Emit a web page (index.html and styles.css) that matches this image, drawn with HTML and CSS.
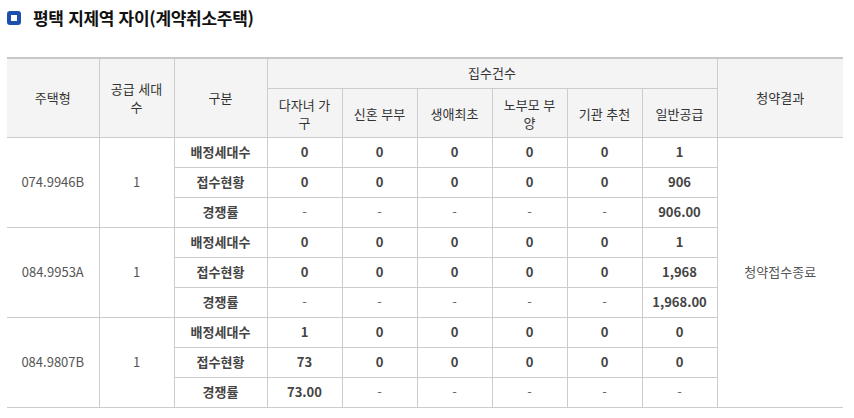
FILE: index.html
```html
<!DOCTYPE html>
<html lang="ko">
<head>
<meta charset="utf-8">
<link rel="stylesheet" href="styles.css">
</head>
<body>
<div class="page">
  <h2 class="title"><span class="title-icon"></span>평택 지제역 자이(계약취소주택)</h2>
  <table class="result">
    <colgroup>
      <col class="c-type"><col class="c-supply"><col class="c-div">
      <col class="c-n"><col class="c-n"><col class="c-n"><col class="c-n"><col class="c-n"><col class="c-n">
      <col class="c-res">
    </colgroup>
    <thead>
      <tr class="h1">
        <th rowspan="2">주택형</th>
        <th rowspan="2">공급 세대수</th>
        <th rowspan="2">구분</th>
        <th colspan="6">집수건수</th>
        <th rowspan="2">청약결과</th>
      </tr>
      <tr class="h2">
        <th>다자녀 가구</th>
        <th>신혼 부부</th>
        <th>생애최초</th>
        <th>노부모 부양</th>
        <th>기관 추천</th>
        <th>일반공급</th>
      </tr>
    </thead>
    <tbody>
      <tr>
        <td rowspan="3" class="plain">074.9946B</td>
        <td rowspan="3" class="plain">1</td>
        <td class="b">배정세대수</td>
        <td class="b">0</td><td class="b">0</td><td class="b">0</td><td class="b">0</td><td class="b">0</td><td class="b">1</td>
        <td rowspan="9" class="plain res">청약접수종료</td>
      </tr>
      <tr>
        <td class="b">접수현황</td>
        <td class="b">0</td><td class="b">0</td><td class="b">0</td><td class="b">0</td><td class="b">0</td><td class="b">906</td>
      </tr>
      <tr>
        <td class="b">경쟁률</td>
        <td class="d">-</td><td class="d">-</td><td class="d">-</td><td class="d">-</td><td class="d">-</td><td class="b">906.00</td>
      </tr>
      <tr>
        <td rowspan="3" class="plain">084.9953A</td>
        <td rowspan="3" class="plain">1</td>
        <td class="b">배정세대수</td>
        <td class="b">0</td><td class="b">0</td><td class="b">0</td><td class="b">0</td><td class="b">0</td><td class="b">1</td>
      </tr>
      <tr>
        <td class="b">접수현황</td>
        <td class="b">0</td><td class="b">0</td><td class="b">0</td><td class="b">0</td><td class="b">0</td><td class="b">1,968</td>
      </tr>
      <tr>
        <td class="b">경쟁률</td>
        <td class="d">-</td><td class="d">-</td><td class="d">-</td><td class="d">-</td><td class="d">-</td><td class="b">1,968.00</td>
      </tr>
      <tr>
        <td rowspan="3" class="plain">084.9807B</td>
        <td rowspan="3" class="plain">1</td>
        <td class="b">배정세대수</td>
        <td class="b">1</td><td class="b">0</td><td class="b">0</td><td class="b">0</td><td class="b">0</td><td class="b">0</td>
      </tr>
      <tr>
        <td class="b">접수현황</td>
        <td class="b">73</td><td class="b">0</td><td class="b">0</td><td class="b">0</td><td class="b">0</td><td class="b">0</td>
      </tr>
      <tr>
        <td class="b">경쟁률</td>
        <td class="b">73.00</td><td class="d">-</td><td class="d">-</td><td class="d">-</td><td class="d">-</td><td class="d">-</td>
      </tr>
    </tbody>
  </table>
</div>
</body>
</html>
```
FILE: styles.css
```css
html, body {
  margin: 0;
  padding: 0;
  background: #fff;
}
body {
  font-family: "Noto Sans CJK KR", "Noto Sans", sans-serif;
  color: #333;
}
.page {
  padding: 0 11px 0 7px;
}
.title {
  display: flex;
  align-items: center;
  gap: 12px;
  margin: 0;
  height: 35px;
  font-size: 17px;
  font-weight: 700;
  color: #111;
  letter-spacing: -0.3px;
}
.title-icon {
  width: 14px;
  height: 14px;
  box-sizing: border-box;
  border: 4px solid #1c4fae;
  border-radius: 3px;
  background: #fff;
  flex: none;
}
.result {
  margin-top: 22px;
  width: 836px;
  border-collapse: collapse;
  table-layout: fixed;
  font-size: 13px;
  border-top: 2px solid #c8c8c8;
}
.c-type { width: 92px; }
.c-supply { width: 75px; }
.c-div { width: 93px; }
.c-n { width: 75px; }
.c-res { width: 126px; }
.result th, .result td {
  border: 1px solid #cccccc;
  text-align: center;
  padding: 0 6px;
  line-height: 18px;
}
.result th:first-child, .result td:first-child { border-left: 0; }
.result tr > th:last-child { border-right: 0; }
.result td.res { border-right: 0; }
.result th {
  background: #f4f4f4;
  font-weight: 400;
  color: #333;
}
.h1 { height: 30px; }
.h2 { height: 49px; }
.h2 th { padding-top: 2px; }
.result tbody tr { height: 30px; }
.result td { color: #444; }
.result td.b { font-weight: 700; color: #444; }
.result td.plain { color: #555; }
.result td.d { color: #666; }
```
